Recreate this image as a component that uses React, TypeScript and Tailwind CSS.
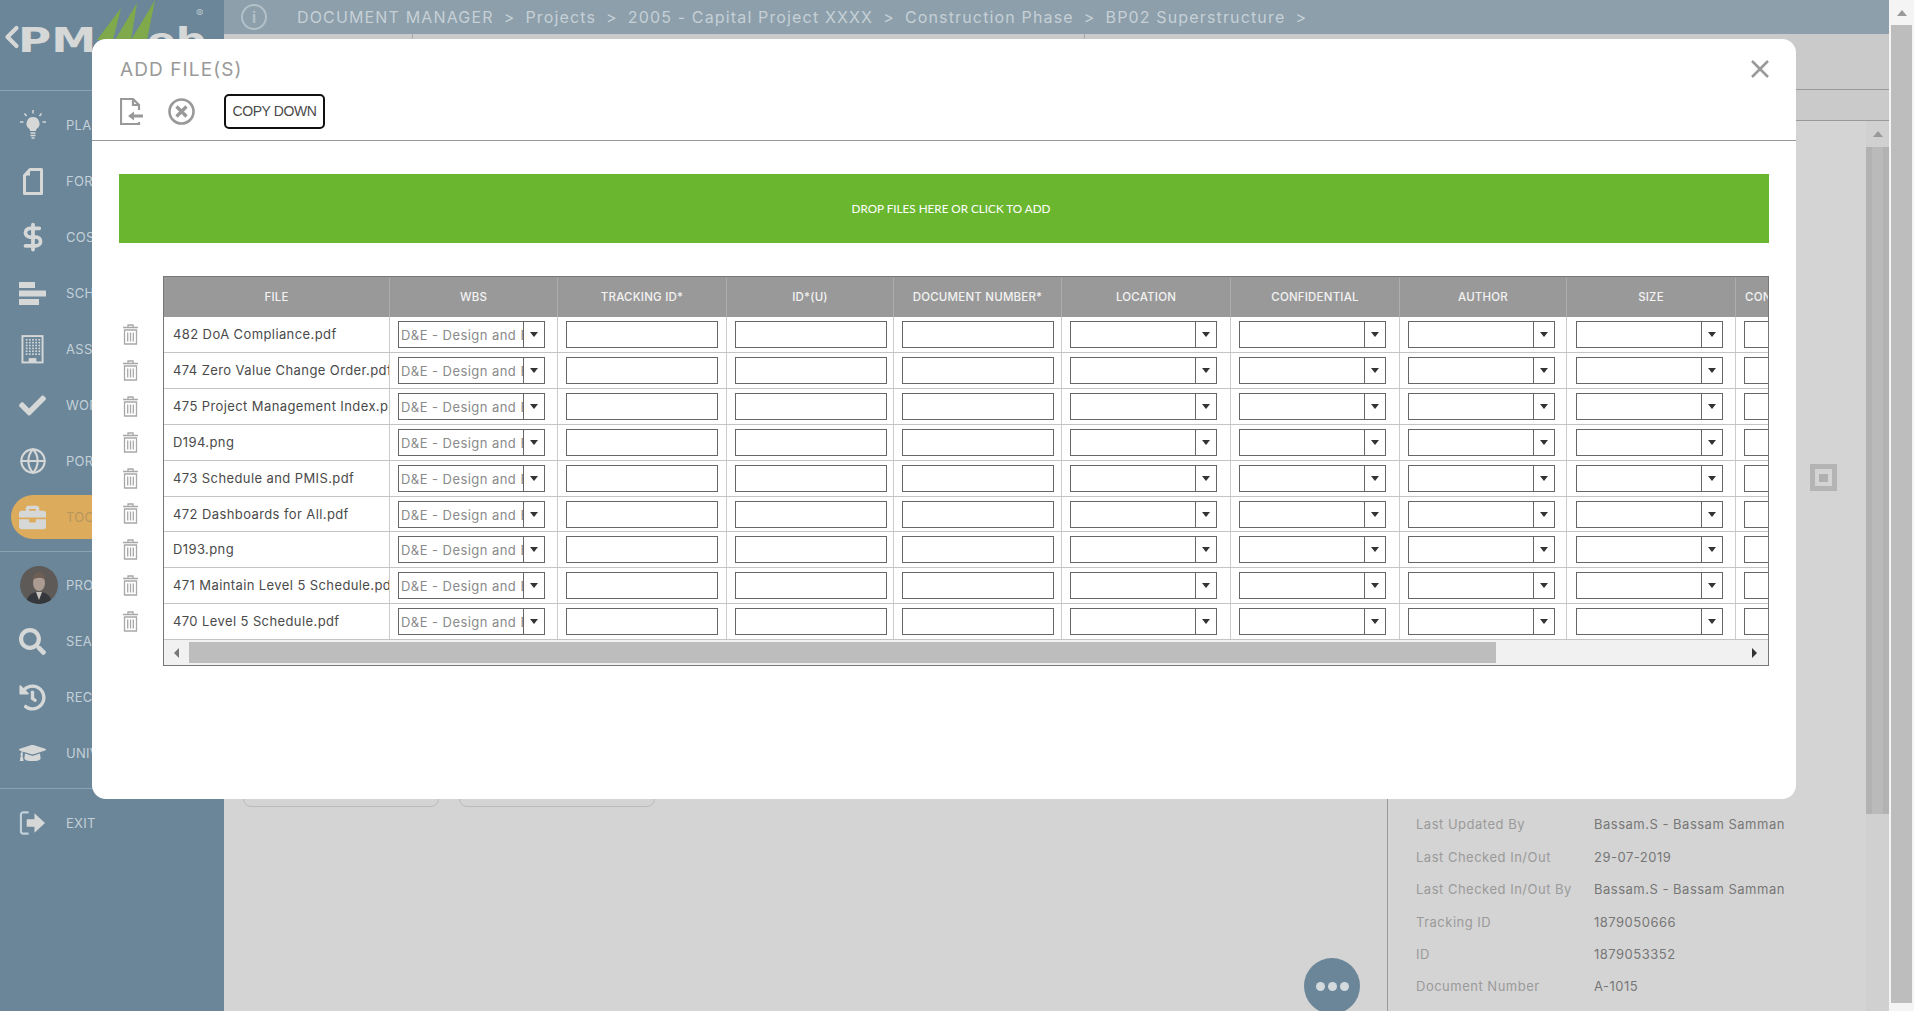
import { ChevronLeft, DollarSign, Globe } from 'lucide-react';
import { FaBriefcase, FaCheck, FaGraduationCap, FaHistory, FaSearch } from 'react-icons/fa';
import type { ReactNode } from 'react';

const iconCls = 'text-[#d6d8d8]';

function Bulb() {
  return (
    <svg width="26" height="30" viewBox="0 0 26 30" fill="none" className={iconCls}>
      <path d="M13 7a6.5 6.5 0 0 0-4 11.6c.8.7 1.2 1.5 1.2 2.4h5.6c0-.9.4-1.7 1.2-2.4A6.500 6.500 0 0 0 13 7z" fill="currentColor" />
      <path d="M10.500 23h5M10.500 25.500h5M11.500 28h3" stroke="currentColor" strokeWidth="1.600" />
      <path d="M13 0v3.500M4.500 3.500l2 2.500M21.500 3.500l-2 2.500M0 12h3.500M22.500 12H26" stroke="currentColor" strokeWidth="1.500" />
    </svg>
  );
}

function Doc() {
  return (
    <svg width="20" height="27" viewBox="0 0 20 27" fill="none" className={iconCls}>
      <path d="M7 1.500h11.500v24H1.500V7.500z" stroke="currentColor" strokeWidth="3" strokeLinejoin="round" />
      <path d="M7 1.500v6H1.500" fill="currentColor" />
    </svg>
  );
}

function Gantt() {
  return (
    <svg width="27" height="23" viewBox="0 0 27 23" className={iconCls}>
      <rect x="0" y="0" width="16" height="6" fill="currentColor" />
      <rect x="0" y="8.500" width="27" height="6" fill="currentColor" />
      <rect x="0" y="17" width="20" height="6" fill="currentColor" />
    </svg>
  );
}

function Building() {
  const windows = [];
  for (let r = 0; r < 6; r++) {
    for (let c = 0; c < 5; c++) {
      windows.push(<rect key={`${r}-${c}`} x={5 + c * 3.300} y={4 + r * 3} width="1.800" height="1.700" fill="currentColor" />);
    }
  }
  return (
    <svg width="23" height="31" viewBox="0 0 24 30" fill="none" className={iconCls}>
      <rect x="1.500" y="1" width="21" height="27.500" stroke="currentColor" strokeWidth="2" />
      {windows}
      <rect x="8" y="24" width="8" height="5" fill="currentColor" />
    </svg>
  );
}

function ExitIcon() {
  return (
    <svg width="28" height="28" viewBox="0 0 28 28" fill="none" className={iconCls}>
      <path d="M10 3H4.500A2.500 2.500 0 0 0 2 5.500v17A2.500 2.500 0 0 0 4.500 25H10" stroke="#bfd0da" strokeWidth="2.200" />
      <path d="M8 10h8V4l11 10-11 10v-6H8z" fill="currentColor" />
    </svg>
  );
}

function Avatar() {
  return (
    <svg width="38" height="38" viewBox="0 0 38 38" className="ml-[12px] shrink-0">
      <clipPath id="avatar-clip">
        <circle cx="19" cy="19" r="19" />
      </clipPath>
      <g clipPath="url(#avatar-clip)">
        <rect width="38" height="38" fill="#5e5a58" />
        <path d="M6 38c1-9 6-12 13-12s12 3 13 12z" fill="#34383c" />
        <path d="M16 26l3 8 3-8z" fill="#c9c4be" />
        <ellipse cx="19" cy="17" rx="6" ry="8" fill="#ab9b90" />
        <path d="M13 14c0-6 3-8 6-8s6 2 6 8c-2-3-9-3-12 0z" fill="#6e5f56" />
      </g>
    </svg>
  );
}

function Trash() {
  return (
    <svg width="17" height="21" viewBox="0 0 17 21" fill="none" stroke="#a8a8a8" strokeWidth="1.300">
      <path d="M6 3V1h5v2M1 3.500h15M2.500 6h12v14h-12zM5.700 8.500v9M8.500 8.500v9M11.300 8.500v9" />
    </svg>
  );
}

function SheetIcon() {
  return (
    <svg width="23" height="27" viewBox="0 0 23 27" fill="none" stroke="#999" strokeWidth="2.200">
      <path d="M19 12V7l-6-6H1v25h18v-2" />
      <path d="M13 1v6h6" />
      <path d="M23 18H12" strokeWidth="2.800" />
      <path d="M8 18l6-4.500v9z" fill="#999" stroke="none" />
    </svg>
  );
}

function CancelIcon() {
  return (
    <svg width="27" height="27" viewBox="0 0 27 27" fill="none" stroke="#999">
      <circle cx="13.500" cy="13.500" r="12" strokeWidth="2.600" />
      <path d="M8.500 8.500l10 10M18.500 8.500l-10 10" strokeWidth="3.400" />
    </svg>
  );
}

const navTop: { label: string; icon: ReactNode; active?: boolean }[] = [
  { label: 'PLANNING', icon: <Bulb /> },
  { label: 'FORMS', icon: <Doc /> },
  { label: 'COSTS', icon: <DollarSign size={30} strokeWidth={3} className={`${iconCls} shrink-0`} /> },
  { label: 'SCHEDULE', icon: <Gantt /> },
  { label: 'ASSETS', icon: <Building /> },
  { label: 'WORKFLOW', icon: <FaCheck size={27} className={iconCls} /> },
  { label: 'PORTFOLIO', icon: <Globe size={28} strokeWidth={1.800} className={`${iconCls} shrink-0`} /> },
  { label: 'TOOLS', icon: <FaBriefcase size={27} className={iconCls} />, active: true },
];

const navBottom: { label: string; icon: ReactNode }[] = [
  { label: 'PROFILE', icon: <Avatar /> },
  { label: 'SEARCH', icon: <FaSearch size={27} className={iconCls} /> },
  { label: 'RECENT', icon: <FaHistory size={27} className={iconCls} /> },
  { label: 'UNIVERSITY', icon: <FaGraduationCap size={28} className={iconCls} /> },
];

function NavItem({ label, icon, active }: { label: string; icon: ReactNode; active?: boolean }) {
  return (
    <div className="h-14 flex items-center pl-[11px]">
      <div className={`h-11 w-[205px] flex items-center rounded-full pl-2 ${active ? 'bg-[#dcab5c]' : ''}`}>
        <div className="w-[27px] mr-[20px] flex items-center justify-center shrink-0">{icon}</div>
        <span className={`text-[13px] mt-[2px] tracking-[0.3px] ${active ? 'text-[#b8975f]' : 'text-[#c3d0d8]'}`}>{label}</span>
      </div>
    </div>
  );
}

function Sidebar() {
  return (
    <aside className="w-[224px] shrink-0 bg-[#6b8699] flex flex-col">
      <div className="h-[91px] border-b border-[#8ba2b0] flex items-start overflow-hidden">
        <ChevronLeft size={36} strokeWidth={2.800} className="text-[#d6d8d8] mt-[19px] -ml-[6px] -mr-[12px] shrink-0" />
        <span className="font-['DejaVu_Sans'] font-bold text-[#d6d8d8] text-[34px] leading-none mt-[23px] w-[82px] shrink-0 origin-left scale-x-[1.33]">PM</span>
        <svg width="60" height="40" viewBox="0 0 60 40" className="shrink-0 -ml-[3px]">
          <polygon points="0,40 24,8 16,40" fill="#7fa94a" />
          <polygon points="18,40 40,3 34,40" fill="#7fa94a" />
          <polygon points="34,40 58,0 50,40" fill="#7fa94a" />
        </svg>
        <span className="font-['DejaVu_Sans'] font-bold text-[#d6d8d8] text-[34px] leading-none mt-[23px] w-[48px] shrink-0 -ml-[10px] origin-left scale-x-[1.25]">eb</span>
        <span className="text-[#b9c6ce] text-[11px] leading-none mt-[8px] ml-[1px]">®</span>
      </div>
      <div className="pt-[6px] h-[461px] border-b border-[#8ba2b0]">
        {navTop.map((n) => (
          <NavItem key={n.label} {...n} />
        ))}
      </div>
      <div className="pt-[5px] h-[237px] border-b border-[#8ba2b0]">
        {navBottom.map((n) => (
          <NavItem key={n.label} {...n} />
        ))}
      </div>
      <div className="pt-[6px]">
        <NavItem label="EXIT" icon={<ExitIcon />} />
      </div>
    </aside>
  );
}

const crumbs = ['DOCUMENT MANAGER', 'Projects', '2005 - Capital Project XXXX', 'Construction Phase', 'BP02 Superstructure'];

const details = [
  ['Last Updated By', 'Bassam.S - Bassam Samman'],
  ['Last Checked In/Out', '29-07-2019'],
  ['Last Checked In/Out By', 'Bassam.S - Bassam Samman'],
  ['Tracking ID', '1879050666'],
  ['ID', '1879053352'],
  ['Document Number', 'A-1015'],
];

function Background() {
  return (
    <main className="flex-1 min-w-0 flex flex-col">
      <header className="h-[34px] bg-[#8c9fab] flex items-center pl-[17px] shrink-0">
        <span className="w-[26px] h-[26px] rounded-full border-2 border-[#b3c0c8] flex items-center justify-center text-[#b3c0c8] text-[15px] font-bold leading-none">i</span>
        <div className="ml-[30px] flex items-center gap-[10px] text-[#c6d0d6] text-[16px] tracking-[1.15px] whitespace-nowrap">
          {crumbs.map((c) => (
            <span key={c} className="flex items-center gap-[10px]">
              {c} <span>&gt;</span>
            </span>
          ))}
        </div>
      </header>
      <div className="h-[56px] bg-[#cacaca] border-b border-[#999] shrink-0 flex items-start">
        <div className="w-[189px] h-[5px] border-r border-[#a8a8a8]" />
        <div className="w-[672px] h-[5px] border-r border-[#a8a8a8]" />
      </div>
      <div className="h-[31px] bg-[#cacaca] border-b border-[#999] shrink-0" />
      <div className="flex-1 flex min-h-0 bg-[#d4d4d4]">
        <div className="w-[1164px] shrink-0 border-r border-[#999] pt-[649px] pl-[19px] flex gap-5 items-start">
          <div className="w-[196px] h-[37px] border border-[#bbb] rounded-lg" />
          <div className="w-[196px] h-[37px] border border-[#bbb] rounded-lg" />
        </div>
        <div className="flex-1 pt-[688px] pl-[28px]">
          {details.map(([k, v]) => (
            <div key={k} className="h-[32.400px] flex items-center text-[13px] tracking-[0.5px] whitespace-nowrap">
              <span className="w-[178px] text-[#9a9a9a]">{k}</span>
              <span className="text-[#777]">{v}</span>
            </div>
          ))}
        </div>
        <div className="w-[23px] shrink-0 bg-[#d0d0d0] flex flex-col items-center">
          <div className="h-[26px] flex items-center justify-center">
            <span className="w-0 h-0 border-x-[5px] border-x-transparent border-b-[6px] border-b-[#999]" />
          </div>
          <div className="w-full h-[667px] bg-[#bababa] border-x-[6px] border-[#b2b2b2]" />
        </div>
      </div>
    </main>
  );
}

function OuterScrollbar() {
  return (
    <div className="w-[25px] shrink-0 bg-[#f4f4f4] pl-[2px] pr-[2px] flex flex-col">
      <div className="h-[25px] flex items-center justify-center">
        <span className="w-0 h-0 border-x-[5px] border-x-transparent border-b-[6px] border-b-[#999]" />
      </div>
      <div className="h-[978px] bg-[#bdbdbd]" />
    </div>
  );
}

const files = [
  '482 DoA Compliance.pdf',
  '474 Zero Value Change Order.pdf',
  '475 Project Management Index.pdf',
  'D194.png',
  '473 Schedule and PMIS.pdf',
  '472 Dashboards for All.pdf',
  'D193.png',
  '471 Maintain Level 5 Schedule.pdf',
  '470 Level 5 Schedule.pdf',
];

type Col = { label: string; kind: 'input' | 'select'; w: string; align?: string; ml?: string };

const cols: Col[] = [
  { label: 'TRACKING ID*', kind: 'input', w: 'w-[169px]' },
  { label: 'ID*(U)', kind: 'input', w: 'w-[167px]' },
  { label: 'DOCUMENT NUMBER*', kind: 'input', w: 'w-[168px]' },
  { label: 'LOCATION', kind: 'select', w: 'w-[169px]' },
  { label: 'CONFIDENTIAL', kind: 'select', w: 'w-[169px]' },
  { label: 'AUTHOR', kind: 'select', w: 'w-[167px]' },
  { label: 'SIZE', kind: 'select', w: 'w-[169px]', ml: 'ml-[9px]' },
  { label: 'CONTRACT', kind: 'input', w: 'w-[168px]', align: 'justify-start pl-[9px]' },
];

function SelectBox({ value, ml = 'ml-[8px]' }: { value?: string; ml?: string }) {
  return (
    <div className={`${ml} w-[147px] h-[27px] border border-[#666] flex bg-white`}>
      <div className="flex-1 min-w-0 overflow-hidden whitespace-nowrap pl-[2px] text-[13px] tracking-[0.45px] leading-[26px] text-[#8a8a8a]">{value}</div>
      <div className="w-[21px] shrink-0 border-l border-[#666] flex items-center justify-center">
        <span className="w-0 h-0 border-x-[4.500px] border-x-transparent border-t-[5px] border-t-[#333]" />
      </div>
    </div>
  );
}

function FileTable() {
  return (
    <div className="w-[1606px] border border-[#777] overflow-hidden">
      <div className="flex h-[40px] pt-px bg-[#999] text-[#f2f2f2] text-[11.500px] font-medium tracking-[0.2px] whitespace-nowrap">
        <div className="w-[226px] shrink-0 border-r border-[#adadad] flex items-center justify-center">FILE</div>
        <div className="w-[168px] shrink-0 border-r border-[#adadad] flex items-center justify-center">WBS</div>
        {cols.map((c) => (
          <div key={c.label} className={`${c.w} shrink-0 border-r border-[#adadad] flex items-center ${c.align ?? 'justify-center'}`}>
            {c.label}
          </div>
        ))}
      </div>
      {files.map((f, i) => (
        <div key={f} className={`flex border-b border-[#c4c4c4] items-center ${i === 5 ? 'h-[35px]' : 'h-9'}`}>
          <div className="w-[226px] shrink-0 h-full border-r border-[#ccc] flex items-center pl-[9px] pt-px overflow-hidden whitespace-nowrap text-[13px] tracking-[0.4px] text-[#4a4a4a]">{f}</div>
          <div className="w-[168px] shrink-0 h-full border-r border-[#ccc] flex items-center">
            <SelectBox value="D&E - Design and Engineering" />
          </div>
          {cols.map((c) => (
            <div key={c.label} className={`${c.w} shrink-0 h-full border-r border-[#ccc] flex items-center`}>
              {c.kind === 'select' ? (
                <SelectBox ml={c.ml} />
              ) : (
                <input readOnly className="ml-[8px] w-[152px] h-[27px] border border-[#666] bg-white" />
              )}
            </div>
          ))}
        </div>
      ))}
      <div className="h-[25px] bg-[#f1f1f1] flex items-center">
        <div className="w-[25px] flex items-center justify-center shrink-0">
          <span className="w-0 h-0 border-y-[5px] border-y-transparent border-r-[5px] border-r-[#777]" />
        </div>
        <div className="w-[1307px] h-[21px] bg-[#bdbdbd] shrink-0" />
        <div className="flex-1 flex justify-end pr-[11px]">
          <span className="w-0 h-0 border-y-[5px] border-y-transparent border-l-[5px] border-l-[#333]" />
        </div>
      </div>
    </div>
  );
}

function Modal() {
  return (
    <div className="absolute left-[92px] top-[39px] w-[1704px] h-[760px] bg-white rounded-[14px] overflow-hidden">
      <div className="h-[102px] border-b border-[#999] relative pl-[28px]">
        <div className="pt-[17px] text-[19px] leading-[28px] text-[#999] tracking-[1.1px]">ADD FILE(S)</div>
        <div className="flex items-center mt-[10px] h-[35px]">
          <SheetIcon />
          <div className="ml-[25px]">
            <CancelIcon />
          </div>
          <button className="ml-[29px] w-[101px] h-[35px] border-2 border-[#111] rounded-[5px] font-['Liberation_Sans',sans-serif] text-[14px] text-[#4a4a4a] tracking-[-0.4px]">COPY DOWN</button>
        </div>
        <svg width="18" height="18" viewBox="0 0 18 18" className="absolute right-[27px] top-[21px]" stroke="#999" strokeWidth="2.500">
          <path d="M1 1l16 16M17 1L1 17" />
        </svg>
      </div>
      <div className="mx-[27px] mt-[33px] h-[69px] bg-[#6ab72f] flex items-center justify-center pl-[14px] pt-px font-['Lato',sans-serif] text-[11.700px] text-white">
        DROP FILES HERE OR CLICK TO ADD
      </div>
      <div className="flex mt-[33px] pl-[27px]">
        <div className="w-[44px] pt-[40px] shrink-0">
          {files.map((f, i) => (
            <div key={f} className={`flex items-center pl-[3px] ${i === 5 ? 'h-[35px]' : 'h-9'}`}>
              <Trash />
            </div>
          ))}
        </div>
        <FileTable />
      </div>
    </div>
  );
}

export default function App() {
  return (
    <div className="relative flex w-full h-[1011px] overflow-hidden bg-[#d4d4d4] font-['Inter',sans-serif]">
      <Sidebar />
      <Background />
      <OuterScrollbar />
      <svg width="27" height="27" viewBox="0 0 27 27" fill="none" className="absolute left-[1810px] top-[464px]">
        <path d="M2.500 24.500V2.500h22v22z" stroke="#b4b4b4" strokeWidth="5" />
        <rect x="9" y="10" width="9" height="8" fill="#b0b0b0" />
      </svg>
      <div className="absolute left-[1304px] top-[958px] w-14 h-14 rounded-full bg-[#6b8699] flex items-center justify-center gap-[3px]">
        <span className="w-[9px] h-[9px] rounded-full bg-[#d3dade]" />
        <span className="w-[9px] h-[9px] rounded-full bg-[#d3dade]" />
        <span className="w-[9px] h-[9px] rounded-full bg-[#d3dade]" />
      </div>
      <Modal />
    </div>
  );
}
